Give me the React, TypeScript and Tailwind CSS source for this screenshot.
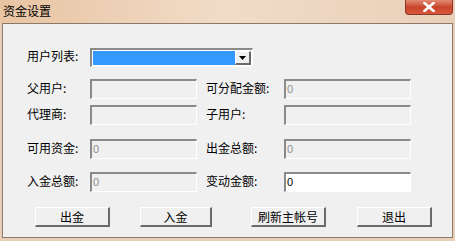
import React from 'react';

const font = { fontFamily: '"Noto Sans CJK SC", "Liberation Sans", sans-serif' };

const Field: React.FC<{ width: string; value?: string; enabled?: boolean }> = ({ width, value, enabled }) => (
  <div
    className={`${width} h-[20px] border-t-2 border-l-2 border-b border-r border-t-[#8a8a8a] border-l-[#8a8a8a] border-b-[#ffffff] border-r-[#ffffff] ${
      enabled ? 'bg-white' : 'bg-[#f0f0f0]'
    } flex items-center pl-[1px]`}
  >
    <span
      className={`text-[11px] leading-none ${enabled ? 'text-black' : 'text-[#8d8d8d]'}`}
      style={{ fontFamily: '"Liberation Sans", sans-serif' }}
    >
      {value}
    </span>
  </div>
);

const Btn: React.FC<{ label: string; width: string; className?: string }> = ({ label, width, className }) => (
  <div
    className={`${width} h-[20px] border-t border-l border-b-2 border-r-2 border-t-white border-l-white border-b-[#6b6b6b] border-r-[#6b6b6b] bg-[#f0f0f0] flex items-center justify-center text-[12px] text-black ${className ?? ''}`}
  >
    {label}
  </div>
);

const Row: React.FC<{
  left: string;
  right: string;
  leftValue?: string;
  rightValue?: string;
  rightEnabled?: boolean;
  className?: string;
}> = ({ left, right, leftValue, rightValue, rightEnabled, className }) => (
  <div className={`flex items-center ${className ?? ''}`}>
    <div className="w-[63px] text-[12px] text-black leading-none -mt-[3px]">{left}</div>
    <Field width="w-[107px]" value={leftValue} />
    <div className="w-[78px] ml-[9px] text-[12px] text-black leading-none -mt-[3px]">{right}</div>
    <Field width="w-[127px]" value={rightValue} enabled={rightEnabled} />
  </div>
);

export default function App() {
  return (
    <div className="w-[455px] h-[241px] bg-[#e9cfb6] flex flex-col" style={font}>
      {/* Title bar */}
      <div className="h-[23px] flex items-start justify-between bg-gradient-to-r from-[#e8c4a2] via-[#f1dcc8] to-[#e9cfb8]">
        <div className="pl-[3px] pt-[3px] text-[12px] leading-[16px] text-black">资金设置</div>
        <div className="mr-[2px] w-[48px] h-[15px] rounded-b-[4px] border border-t-0 border-[#8a3a2a] bg-gradient-to-b from-[#e48a74] via-[#c8452c] to-[#d8573c] flex items-center justify-center">
          <svg width="12" height="10" viewBox="0 0 12 10">
            <path d="M1.5 1 L10.5 9 M10.5 1 L1.5 9" stroke="#ffffff" strokeWidth="2.6" strokeLinecap="square" />
          </svg>
        </div>
      </div>

      {/* Client area */}
      <div className="mx-[2px] w-[451px] h-[215px] border border-[#8b7a6c] bg-[#f0f0f0] flex flex-col pl-[24px]">
        {/* 用户列表 */}
        <div className="flex items-center mt-[24px]">
          <div className="w-[63px] text-[12px] text-black leading-none -mt-[3px]">用户列表:</div>
          <div className="w-[163px] h-[19px] border-t-2 border-l-2 border-b border-r border-t-[#8a8a8a] border-l-[#8a8a8a] border-b-white border-r-white bg-white flex items-stretch p-[1px]">
            <div className="flex-1 bg-[#3399ff]" />
            <div className="w-[16px] border-t border-l border-b-2 border-r-2 border-t-white border-l-white border-b-[#6b6b6b] border-r-[#6b6b6b] bg-[#f0f0f0] flex items-center justify-center">
              <svg width="7" height="4" viewBox="0 0 7 4">
                <path d="M0 0 H7 L3.5 4 Z" fill="#000" />
              </svg>
            </div>
          </div>
        </div>

        <Row left="父用户:" right="可分配金额:" rightValue="0" className="mt-[12px]" />
        <Row left="代理商:" right="子用户:" className="mt-[6px]" />
        <Row left="可用资金:" right="出金总额:" leftValue="0" rightValue="0" className="mt-[14px]" />
        <Row left="入金总额:" right="变动金额:" leftValue="0" rightValue="0" rightEnabled className="mt-[13px]" />

        {/* Buttons */}
        <div className="flex items-center mt-[15px]">
          <Btn label="出金" width="w-[75px]" className="ml-[8px]" />
          <Btn label="入金" width="w-[72px]" className="ml-[30px]" />
          <Btn label="刷新主帐号" width="w-[75px]" className="ml-[39px]" />
          <Btn label="退出" width="w-[75px]" className="ml-[31px]" />
        </div>
      </div>
    </div>
  );
}
